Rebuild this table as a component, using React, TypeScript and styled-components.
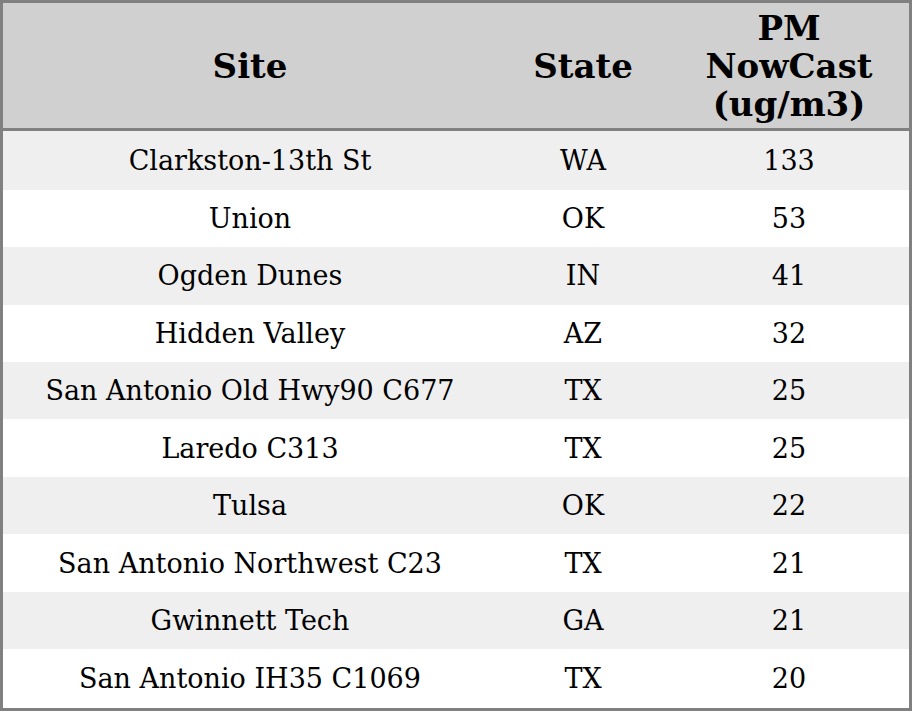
import React from "react";
import styled, { createGlobalStyle } from "styled-components";

const Global = createGlobalStyle`
  html, body {
    margin: 0;
    padding: 0;
    background: #fff;
  }
  body {
    font-family: "DejaVu Serif", serif;
  }
`;

const Table = styled.table`
  width: 912px;
  height: 711px;
  border-collapse: collapse;
  border: 3px solid #808080;
  font-family: "DejaVu Serif", serif;
  color: #000;
`;

const HeadRow = styled.tr`
  background: #d0d0d0;
  border-bottom: 3px solid #808080;
  height: 128px;
`;

const HeadCell = styled.th<{ $w: number }>`
  width: ${(p) => p.$w}px;
  font-size: 34px;
  line-height: 38px;
  font-weight: bold;
  text-align: center;
  padding: 0;
`;

const Row = styled.tr<{ $odd: boolean }>`
  background: ${(p) => (p.$odd ? "#efefef" : "#ffffff")};
`;

const Cell = styled.td`
  font-size: 27px;
  text-align: center;
  padding: 0;
`;

const rows: [string, string, number][] = [
  ["Clarkston-13th St", "WA", 133],
  ["Union", "OK", 53],
  ["Ogden Dunes", "IN", 41],
  ["Hidden Valley", "AZ", 32],
  ["San Antonio Old Hwy90 C677", "TX", 25],
  ["Laredo C313", "TX", 25],
  ["Tulsa", "OK", 22],
  ["San Antonio Northwest C23", "TX", 21],
  ["Gwinnett Tech", "GA", 21],
  ["San Antonio IH35 C1069", "TX", 20],
];

export default function App() {
  return (
    <>
      <Global />
      <Table>
        <thead>
          <HeadRow>
            <HeadCell $w={494}>Site</HeadCell>
            <HeadCell $w={172}>State</HeadCell>
            <HeadCell $w={240}>
              PM
              <br />
              NowCast
              <br />
              (ug/m3)
            </HeadCell>
          </HeadRow>
        </thead>
        <tbody>
          {rows.map(([site, state, pm], i) => (
            <Row key={i} $odd={i % 2 === 0}>
              <Cell>{site}</Cell>
              <Cell>{state}</Cell>
              <Cell>{pm}</Cell>
            </Row>
          ))}
        </tbody>
      </Table>
    </>
  );
}
